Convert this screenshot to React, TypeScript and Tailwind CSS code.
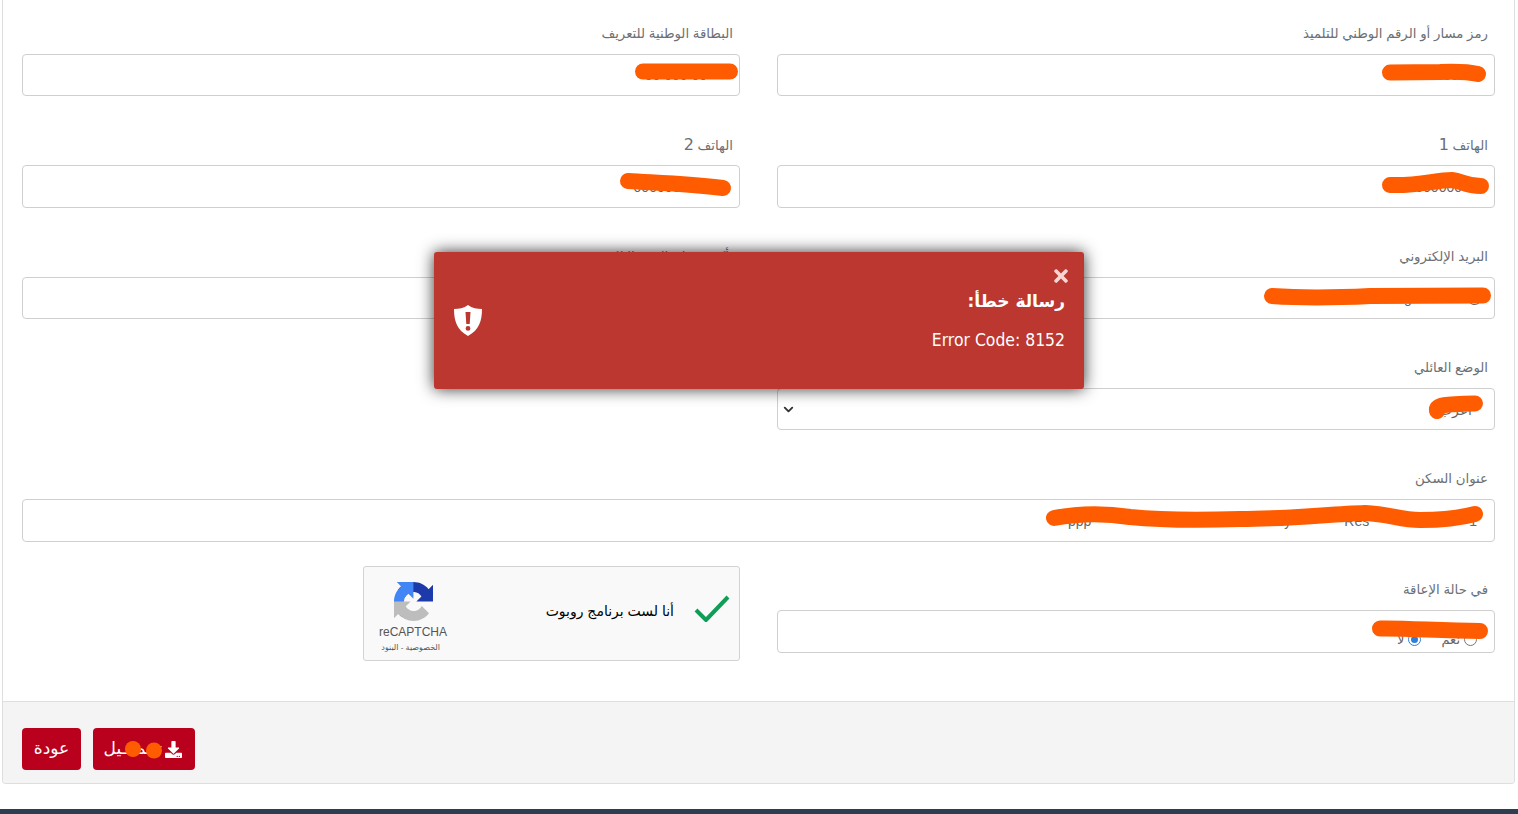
import type { ReactNode } from "react"
import { ChevronDown } from "lucide-react"
import { FaDownload, FaTimes } from "react-icons/fa"

const arabicFont = "font-['Liberation_Sans','DejaVu_Sans',sans-serif]"

function Field({ label, children, className = "" }: { label: ReactNode; children?: ReactNode; className?: string }) {
  return (
    <div className={`h-[111.3px] ${className}`}>
      <label className="block h-[28px] pr-[7px] text-[13.3px] leading-[16px] text-[#6c7075]">{label}</label>
      <div className="flex h-[42.4px] items-end rounded-[4px] border border-[#cfcfcf] bg-white px-[12px] pb-[12px] text-[14px] leading-[16px] text-[#666]">
        {children}
      </div>
    </div>
  )
}

function Digit({ children }: { children: string }) {
  return <span className="font-['DejaVu_Sans',sans-serif] text-[16px]">{children}</span>
}

function RecaptchaLogo() {
  return (
    <svg viewBox="0 0 64 64" className="mt-[3px] h-[39px] w-[39px]">
      <path
        fill="#1c3aa9"
        d="M64 31.955l-.033-1.37V4.687l-7.16 7.16C50.948 4.674 42.033.093 32.05.093c-10.4 0-19.622 4.96-25.458 12.64l11.736 11.86a15.55 15.55 0 0 1 4.754-5.334c2.05-1.6 4.952-2.906 8.968-2.906.485 0 .86.057 1.135.163 4.976.393 9.288 3.14 11.828 7.124l-8.307 8.307L64 31.953"
      />
      <path
        fill="#4285f4"
        d="M31.862.094l-1.37.033H4.594l7.16 7.16C4.58 13.147 0 22.06 0 32.046c0 10.4 4.96 19.622 12.64 25.458L24.5 45.768a15.55 15.55 0 0 1-5.334-4.754c-1.6-2.05-2.906-4.952-2.906-8.968 0-.485.057-.86.163-1.135.393-4.976 3.14-9.288 7.124-11.828l8.307 8.307L31.86.095"
      />
      <path
        fill="#bdbdbd"
        d="M.001 32.045l.033 1.37v25.898l7.16-7.16c5.86 7.173 14.774 11.754 24.76 11.754 10.4 0 19.622-4.96 25.458-12.64L45.677 39.4a15.55 15.55 0 0 1-4.754 5.334c-2.05 1.6-4.952 2.906-8.968 2.906-.485 0-.86-.057-1.135-.163-4.976-.393-9.288-3.14-11.828-7.124l8.307-8.307c-10.522.04-22.4.066-27.3-.005"
      />
    </svg>
  )
}

function Recaptcha() {
  return (
    <div className="-mt-[16px] flex h-[95px] w-[377px] items-center rounded-[3px] border border-[#d3d3d3] bg-[#f9f9f9] pl-[15px] pr-[9px]">
      <svg viewBox="0 0 36 28" className="mb-[12px] h-[28px] w-[36px]">
        <path d="M2 16 L12 26 L34 3" fill="none" stroke="#0f9d58" strokeWidth="4" />
      </svg>
      <span className="mb-[4px] mr-[20px] text-[14px] text-black">أنا لست برنامج روبوت</span>
      <div className="mr-auto mt-[5px] flex w-[68px] flex-col items-center">
        <RecaptchaLogo />
        <span dir="ltr" className="mt-[3px] text-[12px] leading-[16px] text-[#555]">reCAPTCHA</span>
        <span className="mr-[7px] mt-[2px] self-start text-[8px] leading-[12px] text-[#555]">الخصوصية - البنود</span>
      </div>
    </div>
  )
}

function Toast() {
  return (
    <div className="absolute left-[434px] top-[252px] flex h-[137px] w-[650px] rounded-[3px] bg-[#bb372f] text-white shadow-[0_0_16px_rgba(0,0,0,0.8)]">
      <div className="flex-1 pr-[19px] pt-[14px]">
        <FaTimes className="-mr-[6px] h-[20px] w-[20px] text-[#f6d5d3]" />
        <div className="mt-[3px] font-['DejaVu_Sans',sans-serif] text-[17px] font-bold leading-[24px]">رسالة خطأ:</div>
        <div dir="ltr" className="mt-[15px] text-right font-['DejaVu_Sans_Condensed','DejaVu_Sans',sans-serif] text-[17.4px] leading-[24px]">
          Error Code: 8152
        </div>
      </div>
      <svg viewBox="0 0 28 32" className="ml-[20px] mt-[52px] h-[32px] w-[28px]">
        <path
          fillRule="evenodd"
          fill="#fff"
          d="M14 1 C18 4 23 5 28 5 C28 17 25 26 14 32 C3 26 0 17 0 5 C5 5 10 4 14 1Z M11.5 8 L12.3 20 L15.7 20 L16.5 8Z M14 22 A2.4 2.4 0 1 0 14 26.8 A2.4 2.4 0 1 0 14 22Z"
        />
      </svg>
    </div>
  )
}

function Scribbles() {
  const strokes = [
    "M1390 72.5 L1440 72 Q1465 71 1478 74",
    "M1390 185 C1420 186 1435 180 1452 180 C1462 181 1465 186 1481 186",
    "M1272 296 C1300 298 1330 298 1370 296 L1483 295.5",
    "M1437 411 C1436 405 1445 404 1475 403.5",
    "M643 71.5 L730 71.5",
    "M628 181 C660 183 690 184 723 188",
    "M1054 518 C1080 513 1105 513 1130 517 C1170 521 1210 520 1240 519 C1290 519 1330 514 1365 513 C1390 514 1400 520 1420 520 C1445 520 1460 518 1475 514",
    "M1380 628.5 C1410 628 1440 631 1480 631",
  ]
  return (
    <svg className="pointer-events-none absolute inset-0 h-[814px] w-[1518px]" viewBox="0 0 1518 814">
      {strokes.map((d) => (
        <path key={d} d={d} fill="none" stroke="#ff5c02" strokeWidth="16" strokeLinecap="round" />
      ))}
      <circle cx="133" cy="749" r="8" fill="#ff5c02" />
      <circle cx="154" cy="750.5" r="8" fill="#ff5c02" />
    </svg>
  )
}

export default function App() {
  return (
    <div dir="rtl" className={`relative h-[814px] w-[1518px] overflow-hidden bg-white ${arabicFont}`}>
      <div className="ml-[2px] mr-[3px] flex h-[784px] flex-col rounded-b-[4px] border-x border-b border-[#dedede]">
        <div className="flex-1 pl-[19px] pr-[19px] pt-[26px]">
          <div className="grid grid-cols-2 gap-x-[37px]">
            <Field label="رمز مسار أو الرقم الوطني للتلميذ">00000000000</Field>
            <Field label="البطاقة الوطنية للتعريف">
              <span className="mr-[20px]">00 000 00</span>
            </Field>
            <Field label={<>الهاتف <Digit>1</Digit></>}>
              <span className="mr-[20px]">0000000</span>
            </Field>
            <Field label={<>الهاتف <Digit>2</Digit></>}>000000000000</Field>
            <Field label="البريد الإلكتروني">@gmail.com</Field>
            <Field label="تأكيد عنوان البريد الإلكتروني" />
            <div className="h-[111.3px]">
              <label className="block h-[28px] pr-[7px] text-[13.3px] leading-[16px] text-[#6c7075]">الوضع العائلي</label>
              <div className="flex h-[42.4px] items-center justify-between rounded-[4px] border border-[#cfcfcf] bg-white pl-[3px] pr-[12px]">
                <span className="mr-[10px] mt-[2px] text-[14px] text-[#666]">أعزب</span>
                <ChevronDown className="h-[15px] w-[15px] text-[#333]" strokeWidth={3} />
              </div>
            </div>
            <div />
            <Field label="عنوان السكن" className="col-span-2">
              <span dir="ltr" className="mr-[5px] flex">
                <span className="mr-[193px]">ppp</span>
                <span className="mr-[53px]">y</span>
                <span>Res</span>
                <span className="ml-[100px]">1</span>
              </span>
            </Field>
            <Field label="في حالة الإعاقة">
              <span className="mb-[-8px] flex items-center">
                <span className="mr-[5px] h-[13px] w-[13px] rounded-full border border-[#777]" />
                <span className="mr-[4px] text-[13px]">نعم</span>
                <span className="mr-[20px] flex h-[13px] w-[13px] items-center justify-center rounded-full border border-[#2f7fd6]">
                  <span className="h-[7px] w-[7px] rounded-full bg-[#2f7fd6]" />
                </span>
                <span className="mr-[4px] text-[13px]">لا</span>
              </span>
            </Field>
            <Recaptcha />
          </div>
        </div>
        <div className="flex h-[82px] items-start gap-[12px] rounded-b-[4px] border-t border-[#dedede] bg-[#f4f4f4] pl-[19px] pt-[26px]" dir="ltr">
          <button className="flex h-[42px] w-[59px] items-center justify-center rounded-[4px] bg-[#b9001c] font-['DejaVu_Sans',sans-serif] text-[17px] text-white">
            عودة
          </button>
          <button className="flex h-[42px] w-[102px] items-center justify-end gap-[3px] rounded-[4px] bg-[#b9001c] pr-[13px] font-['DejaVu_Sans',sans-serif] text-[17px] text-white">
            <span>تحمـــيل</span>
            <FaDownload className="h-[17px] w-[17px] shrink-0" />
          </button>
        </div>
      </div>
      <div className="mt-[25px] h-[5px] bg-[#2c3e50]" />
      <Scribbles />
      <Toast />
    </div>
  )
}
